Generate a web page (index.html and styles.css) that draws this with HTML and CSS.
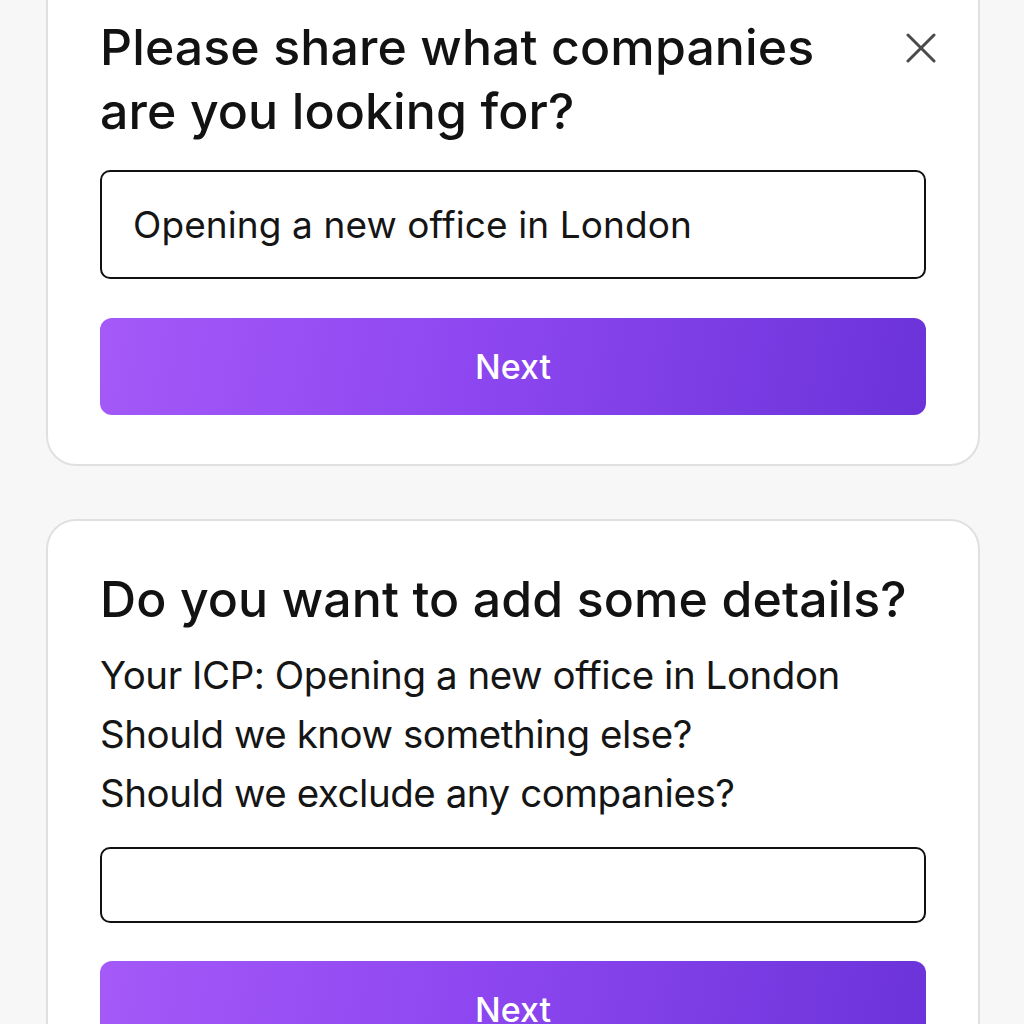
FILE: index.html
```html
<!DOCTYPE html>
<html lang="en">
<head>
<meta charset="utf-8">
<title>Company search</title>
<link rel="stylesheet" href="styles.css">
</head>
<body>
<main class="page">
  <section class="card card-first">
    <div class="card-head">
      <h1 class="title">Please share what companies are you looking for?</h1>
      <button class="close" aria-label="Close">
        <svg width="30" height="30" viewBox="0 0 30 30"><path d="M2 2 L28 28 M28 2 L2 28" stroke="#4a4a4a" stroke-width="3" stroke-linecap="round"/></svg>
      </button>
    </div>
    <div class="field field-tall">Opening a new office in London</div>
    <button class="next">Next</button>
  </section>

  <section class="card card-second">
    <h2 class="title title-second">Do you want to add some details?</h2>
    <div class="lines">
      <p>Your ICP: Opening a new office in London</p>
      <p>Should we know something else?</p>
      <p>Should we exclude any companies?</p>
    </div>
    <div class="field field-short"></div>
    <button class="next">Next</button>
  </section>
</main>
</body>
</html>
```

FILE: styles.css
```css
* { box-sizing: border-box; }
html, body { margin: 0; padding: 0; overflow: hidden; }
body {
  background: #f7f7f7;
  font-family: Inter, "Noto Sans", sans-serif;
  color: #121212;
  height: 1024px;
}
.page {
  padding: 0 44px 0 46px;
  display: flex;
  flex-direction: column;
  gap: 53px;
}
.card {
  background: #fff;
  border: 2px solid #e0e0e0;
  border-radius: 30px;
  padding: 0 52px;
  display: flex;
  flex-direction: column;
}
.card-first {
  margin-top: -40px;
  padding-top: 53px;
  padding-bottom: 49px;
}
.card-head {
  display: flex;
  align-items: flex-start;
  justify-content: space-between;
}
.title {
  margin: 0;
  font-size: 50px;
  line-height: 64px;
  font-weight: 500;
  letter-spacing: 0.1px;
  max-width: 760px;
}
.close {
  border: 0;
  background: none;
  padding: 0;
  margin: 18px -10px 0 0;
  width: 30px;
  height: 30px;
  display: flex;
  flex: none;
}
.field {
  border: 2px solid #111;
  border-radius: 10px;
  background: #fff;
}
.field-tall {
  margin-top: 27px;
  height: 109px;
  display: flex;
  align-items: center;
  padding: 0 31px;
  font-size: 37px;
  letter-spacing: 0.1px;
  font-weight: 400;
  color: #151515;
}
.next {
  margin-top: 39px;
  height: 97px;
  border: 0;
  border-radius: 12px;
  background: linear-gradient(100deg, #a459f8 0%, #8e47f0 45%, #6b33d9 100%);
  color: #fff;
  font-family: Inter, "Noto Sans", sans-serif;
  font-size: 34px;
  font-weight: 500;
  width: 100%;
  flex: none;
}
.card-second {
  padding-top: 46px;
  padding-bottom: 60px;
}
.title-second {
  max-width: none;
}
.lines {
  margin-top: 15px;
}
.lines p {
  margin: 0;
  font-size: 38.5px;
  line-height: 59px;
  letter-spacing: -0.45px;
  color: #151515;
}
.field-short {
  margin-top: 24px;
  height: 76px;
  flex: none;
}
.card-second .next {
  margin-top: 38px;
}
```
